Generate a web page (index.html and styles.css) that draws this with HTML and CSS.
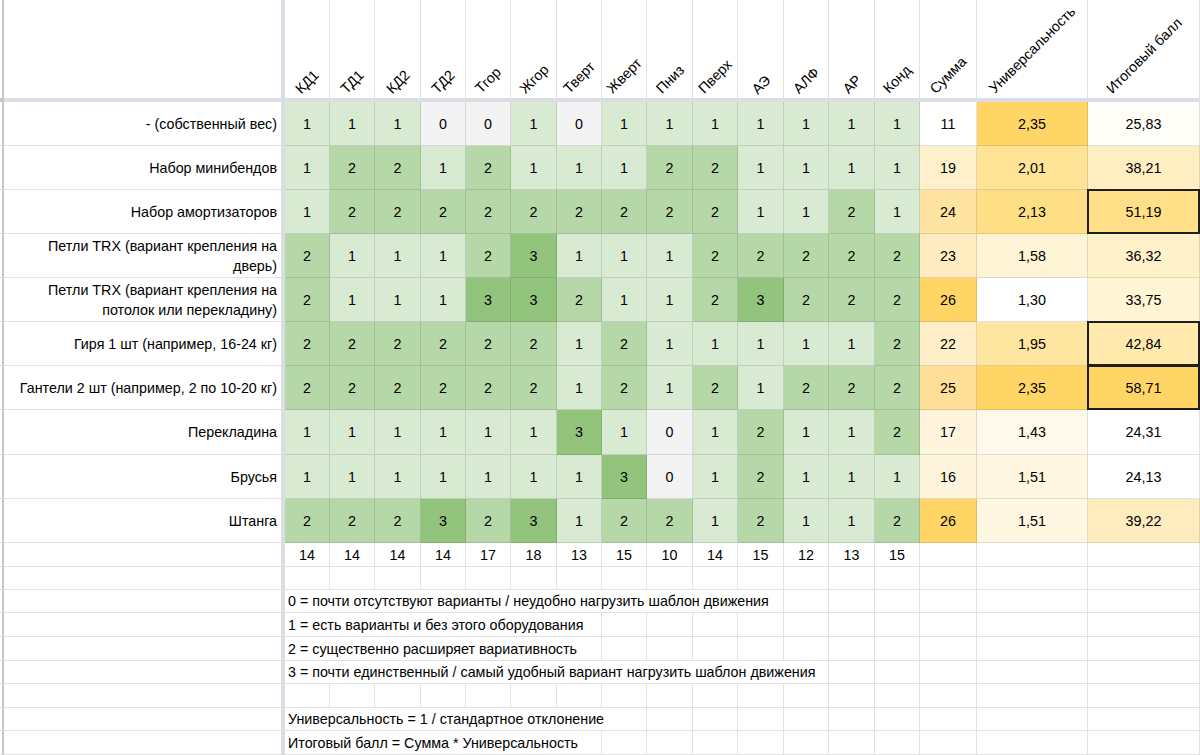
FILE: index.html
```html
<!DOCTYPE html>
<html lang="ru">
<head>
<meta charset="utf-8">
<title>Оборудование</title>
<link rel="stylesheet" href="styles.css">
</head>
<body>
<div class="sheet">
  <!-- header -->
  <div class="s hs"></div>
  <div class="c n hd"></div>
  <div class="c hd"><span>КД1</span></div>
  <div class="c hd"><span>ТД1</span></div>
  <div class="c hd"><span>КД2</span></div>
  <div class="c hd"><span>ТД2</span></div>
  <div class="c hd"><span>Тгор</span></div>
  <div class="c hd"><span>Жгор</span></div>
  <div class="c hd"><span>Тверт</span></div>
  <div class="c hd"><span>Жверт</span></div>
  <div class="c hd"><span>Пниз</span></div>
  <div class="c hd"><span>Пверх</span></div>
  <div class="c hd"><span>АЭ</span></div>
  <div class="c hd"><span>АЛФ</span></div>
  <div class="c hd"><span>АР</span></div>
  <div class="c hd"><span>Конд</span></div>
  <div class="c hd"><span>Сумма</span></div>
  <div class="c hd"><span>Универсальность</span></div>
  <div class="c hd"><span>Итоговый балл</span></div>

  <!-- row 1 -->
  <div class="s"></div>
  <div class="c n">- (собственный вес)</div>
  <div class="c g1">1</div><div class="c g1">1</div><div class="c g1">1</div><div class="c g0">0</div><div class="c g0">0</div><div class="c g1">1</div><div class="c g0">0</div><div class="c g1">1</div><div class="c g1">1</div><div class="c g1">1</div><div class="c g1">1</div><div class="c g1">1</div><div class="c g1">1</div><div class="c g1">1</div>
  <div class="c" style="background:#ffffff">11</div>
  <div class="c" style="background:#ffd666">2,35</div>
  <div class="c" style="background:#fffdf7">25,83</div>

  <!-- row 2 -->
  <div class="s"></div>
  <div class="c n">Набор минибендов</div>
  <div class="c g1">1</div><div class="c g2">2</div><div class="c g2">2</div><div class="c g1">1</div><div class="c g2">2</div><div class="c g1">1</div><div class="c g1">1</div><div class="c g1">1</div><div class="c g2">2</div><div class="c g2">2</div><div class="c g1">1</div><div class="c g1">1</div><div class="c g1">1</div><div class="c g1">1</div>
  <div class="c" style="background:#fff0cc">19</div>
  <div class="c" style="background:#ffe397">2,01</div>
  <div class="c" style="background:#ffeec1">38,21</div>

  <!-- row 3 -->
  <div class="s"></div>
  <div class="c n">Набор амортизаторов</div>
  <div class="c g1">1</div><div class="c g2">2</div><div class="c g2">2</div><div class="c g2">2</div><div class="c g2">2</div><div class="c g2">2</div><div class="c g2">2</div><div class="c g2">2</div><div class="c g2">2</div><div class="c g2">2</div><div class="c g1">1</div><div class="c g1">1</div><div class="c g2">2</div><div class="c g1">1</div>
  <div class="c" style="background:#ffe3a0">24</div>
  <div class="c" style="background:#ffdf86">2,13</div>
  <div class="c bx" style="background:#ffdf87">51,19</div>

  <!-- row 4 -->
  <div class="s"></div>
  <div class="c n">Петли TRX (вариант крепления на<br>дверь)</div>
  <div class="c g2">2</div><div class="c g1">1</div><div class="c g1">1</div><div class="c g1">1</div><div class="c g2">2</div><div class="c g3">3</div><div class="c g1">1</div><div class="c g1">1</div><div class="c g1">1</div><div class="c g2">2</div><div class="c g2">2</div><div class="c g2">2</div><div class="c g2">2</div><div class="c g2">2</div>
  <div class="c" style="background:#ffecc0">23</div>
  <div class="c" style="background:#fff4d6">1,58</div>
  <div class="c" style="background:#fff1c9">36,32</div>

  <!-- row 5 -->
  <div class="s"></div>
  <div class="c n">Петли TRX (вариант крепления на<br>потолок или перекладину)</div>
  <div class="c g2">2</div><div class="c g1">1</div><div class="c g1">1</div><div class="c g1">1</div><div class="c g3">3</div><div class="c g3">3</div><div class="c g2">2</div><div class="c g1">1</div><div class="c g1">1</div><div class="c g2">2</div><div class="c g3">3</div><div class="c g2">2</div><div class="c g2">2</div><div class="c g2">2</div>
  <div class="c" style="background:#ffd666">26</div>
  <div class="c" style="background:#ffffff">1,30</div>
  <div class="c" style="background:#fff4d4">33,75</div>

  <!-- row 6 -->
  <div class="s"></div>
  <div class="c n">Гиря 1 шт (например, 16-24 кг)</div>
  <div class="c g2">2</div><div class="c g2">2</div><div class="c g2">2</div><div class="c g2">2</div><div class="c g2">2</div><div class="c g2">2</div><div class="c g1">1</div><div class="c g2">2</div><div class="c g1">1</div><div class="c g1">1</div><div class="c g1">1</div><div class="c g1">1</div><div class="c g1">1</div><div class="c g2">2</div>
  <div class="c" style="background:#ffefc8">22</div>
  <div class="c" style="background:#ffe6a0">1,95</div>
  <div class="c bx" style="background:#ffe9ac">42,84</div>

  <!-- row 7 -->
  <div class="s"></div>
  <div class="c n">Гантели 2 шт (например, 2 по 10-20 кг)</div>
  <div class="c g2">2</div><div class="c g2">2</div><div class="c g2">2</div><div class="c g2">2</div><div class="c g2">2</div><div class="c g2">2</div><div class="c g1">1</div><div class="c g2">2</div><div class="c g1">1</div><div class="c g2">2</div><div class="c g1">1</div><div class="c g2">2</div><div class="c g2">2</div><div class="c g2">2</div>
  <div class="c" style="background:#ffdf97">25</div>
  <div class="c" style="background:#ffd666">2,35</div>
  <div class="c bx" style="background:#ffd666">58,71</div>

  <!-- row 8 -->
  <div class="s"></div>
  <div class="c n">Перекладина</div>
  <div class="c g1">1</div><div class="c g1">1</div><div class="c g1">1</div><div class="c g1">1</div><div class="c g1">1</div><div class="c g1">1</div><div class="c g3">3</div><div class="c g1">1</div><div class="c g0">0</div><div class="c g1">1</div><div class="c g2">2</div><div class="c g1">1</div><div class="c g1">1</div><div class="c g2">2</div>
  <div class="c" style="background:#fff5dc">17</div>
  <div class="c" style="background:#fff9ec">1,43</div>
  <div class="c" style="background:#ffffff">24,31</div>

  <!-- row 9 -->
  <div class="s"></div>
  <div class="c n">Брусья</div>
  <div class="c g1">1</div><div class="c g1">1</div><div class="c g1">1</div><div class="c g1">1</div><div class="c g1">1</div><div class="c g1">1</div><div class="c g1">1</div><div class="c g3">3</div><div class="c g0">0</div><div class="c g1">1</div><div class="c g2">2</div><div class="c g1">1</div><div class="c g1">1</div><div class="c g1">1</div>
  <div class="c" style="background:#fff5dc">16</div>
  <div class="c" style="background:#fff7e2">1,51</div>
  <div class="c" style="background:#ffffff">24,13</div>

  <!-- row 10 -->
  <div class="s"></div>
  <div class="c n">Штанга</div>
  <div class="c g2">2</div><div class="c g2">2</div><div class="c g2">2</div><div class="c g3">3</div><div class="c g2">2</div><div class="c g3">3</div><div class="c g1">1</div><div class="c g2">2</div><div class="c g2">2</div><div class="c g1">1</div><div class="c g2">2</div><div class="c g1">1</div><div class="c g1">1</div><div class="c g2">2</div>
  <div class="c" style="background:#ffd666">26</div>
  <div class="c" style="background:#fff7e2">1,51</div>
  <div class="c" style="background:#ffecbe">39,22</div>

  <!-- totals -->
  <div class="s"></div>
  <div class="c n"></div>
  <div class="c">14</div><div class="c">14</div><div class="c">14</div><div class="c">14</div><div class="c">17</div><div class="c">18</div><div class="c">13</div><div class="c">15</div><div class="c">10</div><div class="c">14</div><div class="c">15</div><div class="c">12</div><div class="c">13</div><div class="c">15</div>
  <div class="c"></div><div class="c"></div><div class="c"></div>

  <!-- empty -->
  <div class="s"></div>
  <div class="c n"></div>
  <div class="c"></div><div class="c"></div><div class="c"></div><div class="c"></div><div class="c"></div><div class="c"></div><div class="c"></div><div class="c"></div><div class="c"></div><div class="c"></div><div class="c"></div><div class="c"></div><div class="c"></div><div class="c"></div>
  <div class="c"></div><div class="c"></div><div class="c"></div>

  <!-- legend 0 -->
  <div class="s"></div>
  <div class="c n"></div>
  <div class="c lg span11">0 = почти отсутствуют варианты / неудобно нагрузить шаблон движения</div>
  <div class="c"></div><div class="c"></div><div class="c"></div>
  <div class="c"></div><div class="c"></div><div class="c"></div>

  <!-- legend 1 -->
  <div class="s"></div>
  <div class="c n"></div>
  <div class="c lg span7">1 = есть варианты и без этого оборудования</div>
  <div class="c"></div><div class="c"></div><div class="c"></div><div class="c"></div><div class="c"></div><div class="c"></div><div class="c"></div>
  <div class="c"></div><div class="c"></div><div class="c"></div>

  <!-- legend 2 -->
  <div class="s"></div>
  <div class="c n"></div>
  <div class="c lg span7">2 = существенно расширяет вариативность</div>
  <div class="c"></div><div class="c"></div><div class="c"></div><div class="c"></div><div class="c"></div><div class="c"></div><div class="c"></div>
  <div class="c"></div><div class="c"></div><div class="c"></div>

  <!-- legend 3 -->
  <div class="s"></div>
  <div class="c n"></div>
  <div class="c lg span12">3 = почти единственный / самый удобный вариант нагрузить шаблон движения</div>
  <div class="c"></div><div class="c"></div>
  <div class="c"></div><div class="c"></div><div class="c"></div>

  <!-- empty -->
  <div class="s"></div>
  <div class="c n"></div>
  <div class="c"></div><div class="c"></div><div class="c"></div><div class="c"></div><div class="c"></div><div class="c"></div><div class="c"></div><div class="c"></div><div class="c"></div><div class="c"></div><div class="c"></div><div class="c"></div><div class="c"></div><div class="c"></div>
  <div class="c"></div><div class="c"></div><div class="c"></div>

  <!-- formula 1 -->
  <div class="s"></div>
  <div class="c n"></div>
  <div class="c lg span8">Универсальность = 1 / стандартное отклонение</div>
  <div class="c"></div><div class="c"></div><div class="c"></div><div class="c"></div><div class="c"></div><div class="c"></div>
  <div class="c"></div><div class="c"></div><div class="c"></div>

  <!-- formula 2 -->
  <div class="s"></div>
  <div class="c n"></div>
  <div class="c lg span7">Итоговый балл = Сумма * Универсальность</div>
  <div class="c"></div><div class="c"></div><div class="c"></div><div class="c"></div><div class="c"></div><div class="c"></div><div class="c"></div>
  <div class="c"></div><div class="c"></div><div class="c"></div>
</div>
</body>
</html>
```

FILE: styles.css
```css
* {
  box-sizing: border-box;
}

html,
body {
  margin: 0;
  padding: 0;
  background: #ffffff;
}

body {
  width: 1200px;
  height: 755px;
  overflow: hidden;
  font-family: "Liberation Sans", Arial, sans-serif;
  font-size: 14.3px;
  color: #000000;
}

.sheet {
  display: grid;
  grid-template-columns:
    4px 281px
    45px 45px 46px 45px 45px 46px 45px 45px 46px 45px 46px 45px 46px 45px
    57px 111px 112px;
  grid-template-rows:
    102px
    44px 44px 44px 44px 44px 44px 44px 45px 44px 44px
    24px 23px 23px 24px 24px 23px 24px 23px 24px;
}

.s {
  border-right: 2px solid #c6c6c6;
  border-bottom: 1px solid #e2e2e2;
}

.s.hs {
  border-bottom: 4px solid #c2c4c8;
}

.c {
  display: flex;
  align-items: center;
  justify-content: center;
  border-right: 1px solid rgba(0, 0, 0, 0.115);
  border-bottom: 1px solid rgba(0, 0, 0, 0.115);
  white-space: nowrap;
  min-width: 0;
}

.n {
  justify-content: flex-end;
  text-align: right;
  padding-right: 4px;
  line-height: 20px;
  border-right: 4px solid #dadde3;
}

.hd {
  align-items: flex-end;
  padding-bottom: 7px;
  border-bottom: 4px solid #dadde3;
}

.hd span {
  writing-mode: vertical-rl;
  line-height: 16px;
  white-space: nowrap;
  transform: translateY(14.64%) rotate(225deg);
}

.n.hd {
  border-right: 4px solid #dadde3;
}

.g0 { background: #f3f3f3; }
.g1 { background: #d9ead3; }
.g2 { background: #b6d7a8; }
.g3 { background: #93c47d; }

.bx {
  position: relative;
}

.bx::after {
  content: "";
  position: absolute;
  left: -1px;
  top: -1px;
  right: -1px;
  bottom: -1px;
  border: 2px solid #1e1e1e;
}

.lg {
  justify-content: flex-start;
  padding-left: 3px;
}

.span7 { grid-column: span 7; }
.span8 { grid-column: span 8; }
.span11 { grid-column: span 11; }
.span12 { grid-column: span 12; }
```
